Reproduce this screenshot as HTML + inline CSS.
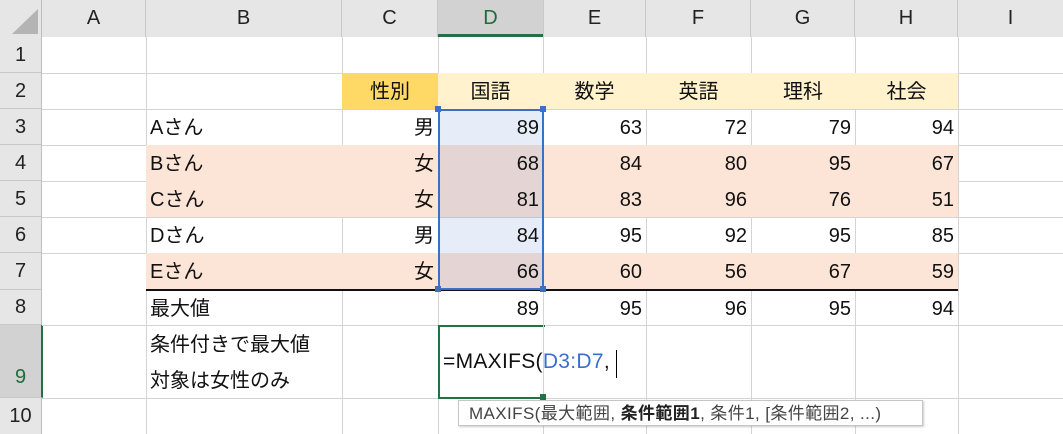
<!DOCTYPE html>
<html><head><meta charset="utf-8"><style>
body{margin:0;width:1063px;height:434px;overflow:hidden;background:#fff;position:relative;font-family:"Liberation Sans","Noto Sans CJK JP",sans-serif;font-size:20px;color:#111}
div{position:absolute;box-sizing:border-box}
.v{width:1px;background:#d4d4d4;top:37px;height:397px}
.h{height:1px;background:#d4d4d4;left:42px;width:1021px}
.hd{background:#e6e6e6;color:#222;text-align:center;font-size:20px;line-height:37px}
.t{height:36px;line-height:38px;white-space:nowrap}
.r{text-align:right;padding-right:4px}
.ctr{text-align:center}
</style></head><body>
<div class="hd" style="left:0;top:0;width:1063px;height:37px;border-bottom:1px solid #bdbdbd"></div>
<div style="left:0;top:0;width:42px;height:37px;background:#e6e6e6;border-right:1px solid #bdbdbd"></div>
<div style="left:12px;top:9px;width:0;height:0;border-left:26px solid transparent;border-bottom:25px solid #b4b4b4"></div>
<div class="hd" style="left:42px;top:0;width:104px;height:37px;border-right:1px solid #c8c8c8">A</div>
<div class="hd" style="left:146px;top:0;width:196px;height:37px;border-right:1px solid #c8c8c8">B</div>
<div class="hd" style="left:342px;top:0;width:96px;height:37px;border-right:1px solid #c8c8c8">C</div>
<div class="hd" style="left:438px;top:0;width:105px;height:37px;background:#d2d2d2;color:#1e6b3c;border-bottom:3px solid #217346">D</div>
<div class="hd" style="left:543px;top:0;width:103px;height:37px;border-left:1px solid #c8c8c8;border-right:1px solid #c8c8c8">E</div>
<div class="hd" style="left:646px;top:0;width:105px;height:37px;border-right:1px solid #c8c8c8">F</div>
<div class="hd" style="left:751px;top:0;width:104px;height:37px;border-right:1px solid #c8c8c8">G</div>
<div class="hd" style="left:855px;top:0;width:103px;height:37px;border-right:1px solid #c8c8c8">H</div>
<div class="hd" style="left:958px;top:0;width:105px;height:37px">I</div>
<div style="left:0;top:37px;width:42px;height:397px;background:#e6e6e6;border-right:1px solid #bdbdbd"></div>
<div class="hd" style="left:0;top:37px;width:41px;height:36px;line-height:36px;border-bottom:1px solid #c8c8c8">1</div>
<div class="hd" style="left:0;top:73px;width:41px;height:36px;line-height:36px;border-bottom:1px solid #c8c8c8">2</div>
<div class="hd" style="left:0;top:109px;width:41px;height:36px;line-height:36px;border-bottom:1px solid #c8c8c8">3</div>
<div class="hd" style="left:0;top:145px;width:41px;height:36px;line-height:36px;border-bottom:1px solid #c8c8c8">4</div>
<div class="hd" style="left:0;top:181px;width:41px;height:36px;line-height:36px;border-bottom:1px solid #c8c8c8">5</div>
<div class="hd" style="left:0;top:217px;width:41px;height:36px;line-height:36px;border-bottom:1px solid #c8c8c8">6</div>
<div class="hd" style="left:0;top:253px;width:41px;height:37px;line-height:37px;border-bottom:1px solid #c8c8c8">7</div>
<div class="hd" style="left:0;top:290px;width:41px;height:35px;line-height:35px;border-bottom:1px solid #c8c8c8">8</div>
<div class="hd" style="left:0;top:325px;width:43px;height:73px;line-height:104px;background:#d2d2d2;color:#1e6b3c;border-right:2px solid #217346;border-bottom:1px solid #c8c8c8">9</div>
<div class="hd" style="left:0;top:398px;width:41px;height:36px;line-height:36px">10</div>
<div class="v" style="left:146px"></div><div class="v" style="left:342px"></div><div class="v" style="left:438px"></div><div class="v" style="left:543px"></div><div class="v" style="left:646px"></div><div class="v" style="left:751px"></div><div class="v" style="left:855px"></div><div class="v" style="left:958px"></div>
<div class="h" style="top:73px"></div><div class="h" style="top:109px"></div><div class="h" style="top:145px"></div><div class="h" style="top:181px"></div><div class="h" style="top:217px"></div><div class="h" style="top:253px"></div><div class="h" style="top:325px"></div><div class="h" style="top:398px"></div>
<div style="left:342px;top:73px;width:96px;height:36px;background:#ffd966"></div>
<div style="left:438px;top:73px;width:520px;height:36px;background:#fff2cc"></div>
<div style="left:146px;top:145px;width:812px;height:72px;background:#fce4d6"></div>
<div style="left:146px;top:253px;width:812px;height:37px;background:#fce4d6"></div>
<div style="left:146px;top:289px;width:812px;height:2px;background:#111"></div>
<div style="left:438px;top:109px;width:106px;height:181px;background:rgba(60,110,200,0.12);border:2px solid #3a6fca"></div>
<div style="left:435px;top:106px;width:6px;height:6px;background:#3a6fca"></div>
<div style="left:540px;top:106px;width:6px;height:6px;background:#3a6fca"></div>
<div style="left:435px;top:286px;width:6px;height:6px;background:#3a6fca"></div>
<div style="left:540px;top:286px;width:6px;height:6px;background:#3a6fca"></div>
<div class="t ctr" style="left:342px;top:73px;width:96px">性別</div>
<div class="t ctr" style="left:438px;top:73px;width:105px">国語</div>
<div class="t ctr" style="left:543px;top:73px;width:103px">数学</div>
<div class="t ctr" style="left:646px;top:73px;width:105px">英語</div>
<div class="t ctr" style="left:751px;top:73px;width:104px">理科</div>
<div class="t ctr" style="left:855px;top:73px;width:103px">社会</div>
<div class="t" style="left:150px;top:109px">Aさん</div><div class="t r" style="left:342px;top:109px;width:96px">男</div>
<div class="t r" style="left:438px;top:109px;width:105px">89</div><div class="t r" style="left:543px;top:109px;width:103px">63</div><div class="t r" style="left:646px;top:109px;width:105px">72</div><div class="t r" style="left:751px;top:109px;width:104px">79</div><div class="t r" style="left:855px;top:109px;width:103px">94</div>
<div class="t" style="left:150px;top:145px">Bさん</div><div class="t r" style="left:342px;top:145px;width:96px">女</div>
<div class="t r" style="left:438px;top:145px;width:105px">68</div><div class="t r" style="left:543px;top:145px;width:103px">84</div><div class="t r" style="left:646px;top:145px;width:105px">80</div><div class="t r" style="left:751px;top:145px;width:104px">95</div><div class="t r" style="left:855px;top:145px;width:103px">67</div>
<div class="t" style="left:150px;top:181px">Cさん</div><div class="t r" style="left:342px;top:181px;width:96px">女</div>
<div class="t r" style="left:438px;top:181px;width:105px">81</div><div class="t r" style="left:543px;top:181px;width:103px">83</div><div class="t r" style="left:646px;top:181px;width:105px">96</div><div class="t r" style="left:751px;top:181px;width:104px">76</div><div class="t r" style="left:855px;top:181px;width:103px">51</div>
<div class="t" style="left:150px;top:217px">Dさん</div><div class="t r" style="left:342px;top:217px;width:96px">男</div>
<div class="t r" style="left:438px;top:217px;width:105px">84</div><div class="t r" style="left:543px;top:217px;width:103px">95</div><div class="t r" style="left:646px;top:217px;width:105px">92</div><div class="t r" style="left:751px;top:217px;width:104px">95</div><div class="t r" style="left:855px;top:217px;width:103px">85</div>
<div class="t" style="left:150px;top:253px">Eさん</div><div class="t r" style="left:342px;top:253px;width:96px">女</div>
<div class="t r" style="left:438px;top:253px;width:105px">66</div><div class="t r" style="left:543px;top:253px;width:103px">60</div><div class="t r" style="left:646px;top:253px;width:105px">56</div><div class="t r" style="left:751px;top:253px;width:104px">67</div><div class="t r" style="left:855px;top:253px;width:103px">59</div>
<div class="t" style="left:150px;top:290px">最大値</div>
<div class="t r" style="left:438px;top:290px;width:105px">89</div><div class="t r" style="left:543px;top:290px;width:103px">95</div><div class="t r" style="left:646px;top:290px;width:105px">96</div><div class="t r" style="left:751px;top:290px;width:104px">95</div><div class="t r" style="left:855px;top:290px;width:103px">94</div>
<div class="t" style="left:150px;top:326px">条件付きで最大値</div>
<div class="t" style="left:150px;top:362px">対象は女性のみ</div>
<div style="left:438px;top:325px;width:107px;height:74px;background:#fff;border:2px solid #217346;border-right:none"></div>
<div style="left:543px;top:325px;width:1px;height:73px;background:#d4d4d4"></div>
<div style="left:540px;top:394px;width:6px;height:6px;background:#217346"></div>
<div class="t" style="left:443px;top:343px;font-size:21px;letter-spacing:0.3px">=MAXIFS(<span style="color:#3a6fca">D3:D7</span>,</div>
<div style="left:616px;top:350px;width:1px;height:28px;background:#000"></div>
<div style="left:458px;top:400px;width:465px;height:26px;background:#fff;border:1px solid #c6c6c6;box-shadow:1px 1px 2px rgba(0,0,0,.2);font-size:17px;letter-spacing:0.4px;line-height:25px;padding-left:10px;color:#444;white-space:nowrap">MAXIFS(最大範囲, <b style="color:#222">条件範囲1</b>, 条件1, [条件範囲2, ...)</div>
</body></html>
